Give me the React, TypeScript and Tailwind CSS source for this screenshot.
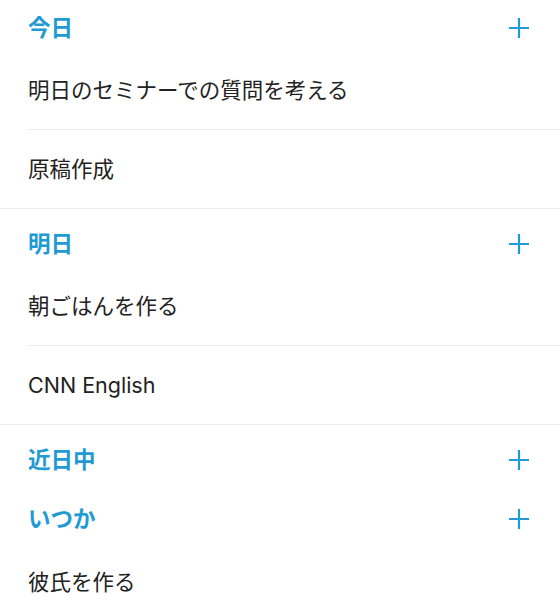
import React from "react";

type Section = { title: string; items: string[] };

const sections: Section[] = [
  { title: "今日", items: ["明日のセミナーでの質問を考える", "原稿作成"] },
  { title: "明日", items: ["朝ごはんを作る", "CNN English"] },
  { title: "近日中", items: [] },
  { title: "いつか", items: ["彼氏を作る"] },
];

function Plus() {
  return (
    <svg width="20" height="20" viewBox="0 0 20 20" className="block">
      <path d="M10 0v20M0 10h20" stroke="#1f9ad4" strokeWidth="2.2" fill="none" />
    </svg>
  );
}

export default function App() {
  return (
    <div
      className="w-[560px] h-[606px] overflow-hidden bg-white"
      style={{ fontFamily: '"Inter", "Noto Sans CJK JP", sans-serif' }}
    >
      <div className="-mt-[7px]">
        {sections.map((s, si) => {
          const fullBorder = s.items.length > 0 && si < sections.length - 1;
          return (
            <div key={s.title} className={fullBorder ? "border-b border-[#ebebeb]" : ""}>
              <div className="h-[59px] pt-[20px] pl-[28px] pr-[31px] flex items-start justify-between">
                <span className="text-[22.5px] leading-[30px] font-bold text-[#1f9ad4]">{s.title}</span>
                <div className="pt-[5px]">
                  <Plus />
                </div>
              </div>
              {s.items.map((it, i) => (
                <div
                  key={it}
                  className={
                    "ml-[28px] h-[78px] flex items-center text-[21.5px] text-[#222222] " +
                    (i < s.items.length - 1 ? "border-b border-[#ebebeb]" : "")
                  }
                >
                  <span>{it}</span>
                </div>
              ))}
            </div>
          );
        })}
      </div>
    </div>
  );
}
